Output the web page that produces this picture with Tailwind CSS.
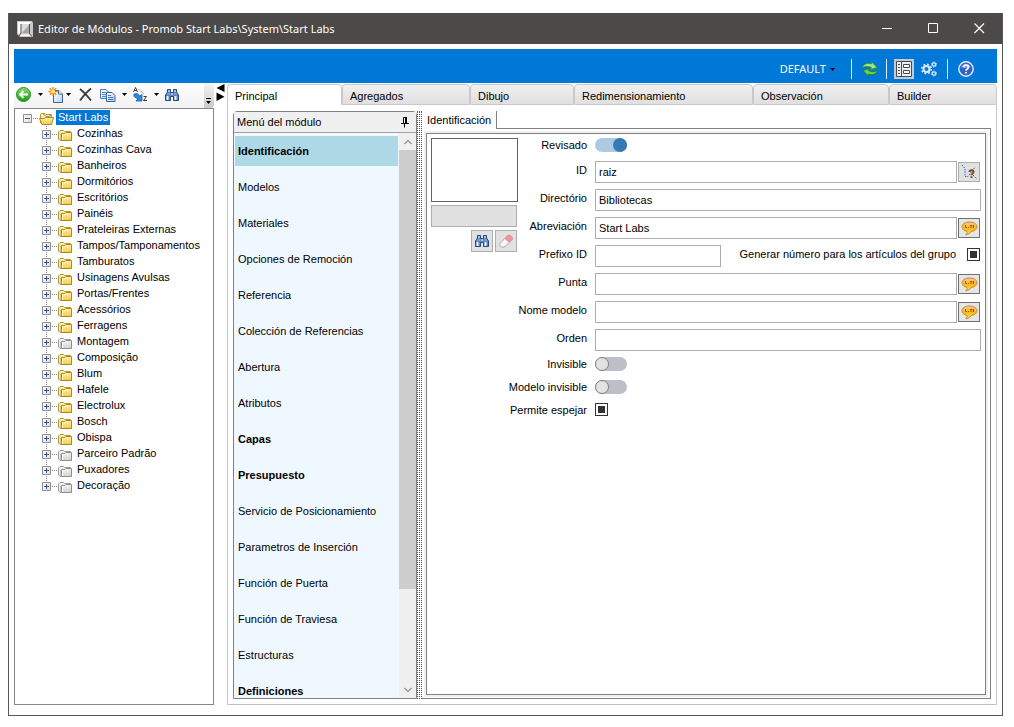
<!DOCTYPE html>
<html lang="es">
<head>
<meta charset="utf-8">
<title>Editor de Módulos - Promob Start Labs\System\Start Labs</title>
<script src="https://cdn.jsdelivr.net/npm/@tailwindcss/browser@4"></script>
</head>
<body class="bg-white text-black text-[11px] leading-4 font-['Liberation_Sans',sans-serif]">
<svg class="absolute size-0" aria-hidden="true">
  <defs>
    <linearGradient id="gold" x1="0" y1="0" x2="0" y2="1"><stop offset="0" stop-color="#fdf3a8"/><stop offset="1" stop-color="#f3c94a"/></linearGradient>
    <linearGradient id="grey" x1="0" y1="0" x2="0" y2="1"><stop offset="0" stop-color="#f4f4f4"/><stop offset="1" stop-color="#d2d2d2"/></linearGradient>
    <linearGradient id="green" x1="0" y1="0" x2="0" y2="1"><stop offset="0" stop-color="#86dc70"/><stop offset="1" stop-color="#149a14"/></linearGradient>
    <linearGradient id="page" x1="0" y1="0" x2="1" y2="1"><stop offset="0" stop-color="#ffffff"/><stop offset="1" stop-color="#b5d4f5"/></linearGradient>
    <linearGradient id="bubble" x1="0" y1="0" x2="0" y2="1"><stop offset="0" stop-color="#f8c899"/><stop offset=".5" stop-color="#fcb816"/><stop offset="1" stop-color="#ffe030"/></linearGradient>
    <linearGradient id="expand" x1="0" y1="0" x2="1" y2="1"><stop offset="0" stop-color="#ffffff"/><stop offset="1" stop-color="#dcdcdc"/></linearGradient>
  </defs>
  <symbol id="folder" viewBox="0 0 14 12">
    <path d="M.5 10V3L2 1.5H5.500L6.500 2.500H12.500V5H3V11.500H2Z" fill="#fbefb0" stroke="#bb9327"/>
    <path d="M3.500 11.500V4.500H7L8 3.500H13.500V11.500Z" fill="url(#gold)" stroke="#b0871c"/>
    <path d="M4.500 5V11M4 5.500H7.500" stroke="#fffbe0" fill="none"/>
  </symbol>
  <symbol id="folder-off" viewBox="0 0 14 12">
    <path d="M.5 10V3L2 1.5H5.500L6.500 2.500H12.500V5H3V11.500H2Z" fill="#eee" stroke="#9a9a9a"/>
    <path d="M3.500 11.500V4.500H7L8 3.500H13.500V11.500Z" fill="url(#grey)" stroke="#8d8d8d"/>
    <path d="M4.500 5V11M4 5.500H7.500" stroke="#fff" fill="none"/>
  </symbol>
  <symbol id="folder-open" viewBox="0 0 15 13">
    <path d="M1.500 11V2.500L2.500 1.500H6L7 2.500H12.500V6" fill="#fbefb0" stroke="#bb9327"/>
    <path d="M4 2 8 5 12 3.500" fill="none" stroke="#8d8d8d"/>
    <path d="M3 12.500H12.500L14.500 5.500H6.500L5.500 6.500H.500Z" fill="url(#gold)" stroke="#b0871c"/>
  </symbol>
  <symbol id="binoculars" viewBox="0 0 16 14">
    <path d="M3.500 1.500H6.500V4.500H9.500V1.500H12.500V4L14.500 7V12.500H9.500V8.500H6.500V12.500H1.500V7L3.500 4Z" fill="#5f83bd" stroke="#24457f"/>
    <path d="M5 2V4M11 2V4M7 6H9" stroke="#fff"/>
    <path d="M3.500 8V12M11.500 8V12" stroke="#e9f1fb" stroke-width="2"/>
    <path d="M3 6H6M10 6H13" stroke="#9bb6dc"/>
  </symbol>
  <symbol id="caret" viewBox="0 0 5 3"><path d="M0 0H5L2.500 3Z"/></symbol>
  <symbol id="speech" viewBox="0 0 17 15">
    <path d="M8.500 1C4 1 1 3 1 5.800C1 8.200 3.200 9.900 6 10.400C6.500 11.500 6 12.800 4.800 13.800C7.800 13.300 9.500 12 10.200 10.500C13.700 10 16 8.300 16 5.800C16 3 13 1 8.500 1Z" fill="url(#bubble)" stroke="#c08d30"/>
    <path d="M4.500 4V6.500H6M7 6.500H8M9 4.500H11.500M9 6H11.500M12.500 4V7" fill="none" stroke="#b2560d"/>
  </symbol>
</svg>

<div class="flex h-screen flex-col pt-[13px] pr-[11px] pb-[11px] pl-2">
  <div class="flex min-h-0 flex-1 flex-col border border-t-0 border-[#58565a]">
    <header class="flex h-[31px] shrink-0 items-center bg-[#4c4a48] pl-2 pr-[17px] text-white">
      <svg class="mr-[5px] size-4 shrink-0" viewBox="0 0 16 16"><path d="M0 0H15L16 2V16H3L0 13Z" fill="#c8c8c8"/><path d="M1 1H14L12.500 3H4V12L1 13Z" fill="#fff"/><path d="M4 3H12V12H4Z" fill="#dcdcdc"/><path d="M12 4V12H5Z" fill="#a7a7a7"/><path d="M4 3V12M12.500 3V12.500" stroke="#54514e"/><path d="M4 12 2 15M12.500 12.500 15 15.500" stroke="#54514e"/><path d="M4 13.500H12L13.500 15H3Z" fill="#fff"/></svg>
      <h1 class="flex-1 truncate font-['Noto_Sans',sans-serif] text-[11px]">Editor de Módulos - Promob Start Labs\System\Start Labs</h1>
      <div class="flex gap-[35px]">
        <button aria-label="Minimizar" type="button"><svg class="size-[11px]" viewBox="0 0 11 11"><path d="M0 5.500H10" stroke="#fff"/></svg></button>
        <button aria-label="Maximizar" type="button"><svg class="size-[11px]" viewBox="0 0 11 11"><path d="M.500.500H9.500V9.500H.500Z" fill="none" stroke="#fff"/></svg></button>
        <button aria-label="Cerrar" type="button"><svg class="size-[11px]" viewBox="0 0 11 11"><path d="M.500.500 10 10M10 .500.500 10" stroke="#fff" stroke-width="1.200"/></svg></button>
      </div>
    </header>

    <div class="flex min-h-0 flex-1 flex-col px-[5px] pt-[5px] pb-2.5">
      <div class="flex h-[34px] shrink-0 items-center justify-end bg-[#0078d7] pt-1.5 pr-[23px] text-white">
        <button type="button" class="mr-4 flex items-center gap-1 font-['Noto_Sans',sans-serif] text-[11px]">DEFAULT<svg class="h-[3px] w-[5px] text-black" fill="currentColor"><use href="#caret"/></svg></button>
        <span class="mr-2.5 h-5 w-px bg-white/90"></span>
        <button type="button" aria-label="Actualizar" class="mr-2"><svg class="size-4" viewBox="0 0 16 16"><path d="M.500 6.500C1.500 3 5.500 1.500 9.500 3V.800L15 6.500 8.500 8.500 9.500 6.500C7 5 3.500 5 .500 6.500Z" fill="#a4e886" stroke="#2f9a35" stroke-width=".9"/><path d="M15.500 9.500C14.500 13 10.500 14.500 6.500 13V15.200L1 9.500 7.500 7.500 6.500 9.500C9 11 12.500 11 15.500 9.500Z" fill="#6fcf50" stroke="#1f8526" stroke-width=".9"/></svg></button>
        <span class="mr-[7px] h-5 w-px bg-white/90"></span>
        <button type="button" aria-label="Panel de propiedades" class="mr-[7px] flex size-5 items-center justify-center bg-[#c3ccd6]"><svg class="size-[18px]" viewBox="0 0 18 18"><path d="M1.500 1.500H16.500V16.500H1.500Z" fill="#eceef0" stroke="#4a4a4a"/><path d="M6.500 2V16M3 4.500H5M3 7.500H5M3 10.500H5M3 13.500H5" stroke="#4a4a4a"/><path d="M8.500 4.500H14.500V7.500H8.500ZM8.500 10.500H14.500V13.500H8.500Z" fill="#fff" stroke="#4a4a4a"/></svg></button>
        <button type="button" aria-label="Configuración" class="mr-2.5"><svg class="size-4" viewBox="0 0 16 16" fill="none" stroke="#dceaf8"><circle cx="5.500" cy="8" r="3" stroke-width="2"/><circle cx="5.500" cy="8" r="4.700" stroke-width="1.600" stroke-dasharray="1.850 1.840"/><circle cx="13" cy="3.500" r="1.600" stroke-width="1.200"/><circle cx="13" cy="3.500" r="2.500" stroke-width="1" stroke-dasharray="1 .960"/><circle cx="13" cy="12.500" r="1.600" stroke-width="1.200"/><circle cx="13" cy="12.500" r="2.500" stroke-width="1" stroke-dasharray="1 .960"/></svg></button>
        <span class="mr-2.5 h-5 w-px bg-white/90"></span>
        <button type="button" aria-label="Ayuda"><svg class="size-4" viewBox="0 0 16 16"><circle cx="8" cy="8" r="7.200" fill="#2f63c8" stroke="#e4edfb" stroke-width="1.400"/><path d="M3 6A5.500 5 0 0 1 13 6Q8 8 3 6" fill="#6f9ae6"/><path d="M5.600 6.300C5.600 3.300 10.400 3.300 10.400 6.200C10.400 8 8 8 8 9.800M8 11V12.600" fill="none" stroke="#fff" stroke-width="1.800"/></svg></button>
      </div>

      <div class="flex min-h-0 flex-1">
        <aside class="flex w-[200px] shrink-0 flex-col">
          <div class="flex h-[25px] shrink-0 items-stretch rounded-r bg-linear-to-b from-white to-[#f1f1f1]">
            <div class="flex flex-1 items-center pb-0.5 pl-0.5">
              <button type="button" aria-label="Volver"><svg class="size-[15px]" viewBox="0 0 15 15"><circle cx="7.500" cy="7.500" r="7" fill="url(#green)" stroke="#2a8f22"/><path d="M12 7.500H4.500M7.500 4 4 7.500 7.500 11" fill="none" stroke="#fff" stroke-width="2"/></svg></button>
              <button type="button" aria-label="Historial" class="ml-[7px]"><svg class="h-[3px] w-[5px]"><use href="#caret"/></svg></button>
              <button type="button" aria-label="Nuevo" class="ml-[5px]"><svg class="size-4" viewBox="0 0 16 16"><path d="M5.500 3.500H10.500L14.500 7V15.500H5.500Z" fill="url(#page)" stroke="#46618c"/><path d="M10.500 3.500V7H14.500" fill="#fff" stroke="#46618c"/><path d="M5 0V9M.500 4.500H9.500M1.800 1.300 8.200 7.700M8.200 1.300 1.800 7.700" stroke="#e98a11" stroke-width="1.300"/><circle cx="5" cy="4.500" r="2" fill="#ffe27a"/></svg></button>
              <button type="button" aria-label="Opciones de nuevo" class="ml-0.5"><svg class="h-[3px] w-[5px]"><use href="#caret"/></svg></button>
              <button type="button" aria-label="Eliminar" class="ml-2"><svg class="h-[13px] w-[13px]" viewBox="0 0 13 13"><path d="M1 1Q6 5 12 12.500M12 .500Q6 5 1 12.500" fill="none" stroke="#3c3c3c" stroke-width="1.800"/></svg></button>
              <button type="button" aria-label="Copiar" class="ml-2"><svg class="size-4" viewBox="0 0 16 16"><path d="M.500 2.500H6L8.500 5V11.500H.500Z" fill="url(#page)" stroke="#5579b5"/><path d="M2 5.500H6M2 7.500H6M2 9.500H6" stroke="#5d8ac8"/><path d="M6.500 5.500H12L15 8.500V14.500H6.500Z" fill="url(#page)" stroke="#3d62a5"/><path d="M8 8.500H11M8 10.500H13.500M8 12.500H13.500" stroke="#3f75bd"/></svg></button>
              <button type="button" aria-label="Opciones de copia" class="ml-1.5"><svg class="h-[3px] w-[5px]"><use href="#caret"/></svg></button>
              <button type="button" aria-label="Ordenar" class="ml-1.5"><svg class="size-[15px]" viewBox="0 0 15 15"><path d="M.500 5 2.500 .500 4.500 5M1.300 3.500H3.800M10.500 9.500H13.500L10.500 13.500H14" fill="none" stroke="#3c3c3c"/><path d="M6 2.500 8 4.500 11 7" stroke="#777" stroke-dasharray="1 1"/><path d="M1 7 4.500 6.500 6.500 9 9 7.500V14H3L5 12 1 9.500Z" fill="#2f8be0" stroke="#1558a8" stroke-width=".8"/></svg></button>
              <button type="button" aria-label="Opciones de orden" class="ml-1.5"><svg class="h-[3px] w-[5px]"><use href="#caret"/></svg></button>
              <button type="button" aria-label="Buscar" class="ml-[5px]"><svg class="h-3.5 w-4"><use href="#binoculars"/></svg></button>
            </div>
            <button type="button" aria-label="Más botones" class="flex w-2.5 items-end rounded-r bg-linear-to-b from-[#f6f6f6] to-[#c9c9c9] pb-1 pl-0.5"><svg class="h-1.5 w-[5px]" viewBox="0 0 5 6"><path d="M0 0H5V1H0ZM0 3H5L2.500 6Z"/></svg></button>
          </div>
          <ul id="tree" class="min-h-0 flex-1 overflow-hidden border border-[#828790] pt-px pl-2"></ul>
        </aside>

        <div class="flex w-[13px] shrink-0 flex-col items-center pt-px">
          <svg class="h-[17px] w-[9px]" viewBox="0 0 9 17"><path d="M8.500 0V8L.500 4ZM.500 8.500V17L8.500 12.700Z"/></svg>
        </div>

        <main class="flex min-w-0 flex-1 flex-col">
          <nav class="flex h-[22px] shrink-0 pt-px [&>button]:flex [&>button]:rounded-t-sm [&>button]:border [&>button]:border-[#c9c9c9] [&>button]:pt-[3px] [&>button]:leading-4">
            <button type="button" class="w-[115px] border-b-0! bg-white pl-[7px]">Principal</button>
            <button type="button" class="w-32 bg-linear-to-b from-[#f0f0f0] to-[#dfdfdf] pl-[7px]">Agregados</button>
            <button type="button" class="w-[104px] bg-linear-to-b from-[#f0f0f0] to-[#dfdfdf] pl-[7px]">Dibujo</button>
            <button type="button" class="w-[179px] bg-linear-to-b from-[#f0f0f0] to-[#dfdfdf] pl-[7px]">Redimensionamiento</button>
            <button type="button" class="w-[136px] bg-linear-to-b from-[#f0f0f0] to-[#dfdfdf] pl-[7px]">Observación</button>
            <button type="button" class="flex-1 bg-linear-to-b from-[#f0f0f0] to-[#dfdfdf] pl-[7px]">Builder</button>
          </nav>

          <div class="flex min-h-0 flex-1 border border-t-0 border-[#c3c3c3] pt-1.5 pr-[5px] pb-[5px] pl-[5px]">
            <section class="flex w-[184px] shrink-0 flex-col rounded-t-sm border border-[#828282]">
              <div class="flex h-[21px] shrink-0 items-center border-b border-[#a0a0a0] bg-[#f0f0f0] pr-[7px] pl-[3px]">
                <h2 class="flex-1">Menú del módulo</h2>
                <button type="button" aria-label="Anclar"><svg class="h-[11px] w-2" viewBox="0 0 8 11"><path d="M2.500 6.500V.500H5.500V6.500M0 6.500H8M3.500 7V10.500" fill="none" stroke="#000"/><path d="M5 0V7" stroke="#000" stroke-width="2"/></svg></button>
              </div>
              <div class="flex min-h-0 flex-1 bg-[#f0f8ff]">
                <ul id="menu" class="flex min-w-0 flex-1 flex-col gap-1.5 overflow-hidden pt-[3px] pr-px pl-px"></ul>
                <div class="flex w-[17px] shrink-0 flex-col bg-[#f0f0f0]">
                  <svg class="size-[17px] shrink-0" viewBox="0 0 17 17"><path d="M5.500 11 9 7.500 12.500 11" fill="none" stroke="#9b9b9b" stroke-width="1.500"/></svg>
                  <div class="w-full flex-[439] bg-[#cdcdcd]"></div>
                  <div class="flex-[92]"></div>
                  <svg class="size-[17px] shrink-0" viewBox="0 0 17 17"><path d="M5.500 7 9 10.500 12.500 7" fill="none" stroke="#9b9b9b" stroke-width="1.500"/></svg>
                </div>
              </div>
            </section>

            <div class="flex w-[5px] shrink-0 justify-between">
              <span class="w-px border-l border-dotted border-[#555]"></span>
              <span class="w-px border-l border-dotted border-[#555]"></span>
              <span class="w-px border-l border-dotted border-[#555]"></span>
            </div>

            <section class="flex min-w-0 flex-1 flex-col">
              <div class="flex h-[18px] shrink-0">
                <button type="button" class="w-[75px] border-r border-[#828282] pl-[5px] text-left">Identificación</button>
                <span class="flex-1 border-b border-[#828282]"></span>
              </div>
              <div class="flex min-h-0 flex-1 border-r border-b border-[#828282] pt-0.5 pr-0.5 pb-px pl-0.5">
                <div class="min-w-0 flex-1 bg-[#f0f0f0] p-0.5">
                <form class="grid h-full grid-cols-1 content-start border border-[#828282] bg-white pr-1">
                  <div class="col-start-1 row-start-1 mt-1 ml-1 flex w-[87px] flex-col gap-[3px] self-start">
                    <div class="h-16 border border-[#646464]"></div>
                    <div class="mr-px h-[22px] border border-[#adadad] bg-[#e1e1e1]"></div>
                    <div class="mr-px flex justify-end gap-0.5">
                      <button type="button" aria-label="Buscar imagen" class="flex size-[22px] items-center justify-center border border-[#adadad] bg-[#e1e1e1]"><svg class="h-3.5 w-4"><use href="#binoculars"/></svg></button>
                      <button type="button" aria-label="Borrar imagen" class="flex size-[22px] items-center justify-center border border-[#adadad] bg-[#e1e1e1]"><svg class="size-4" viewBox="0 0 16 16"><path d="M2 10.500 9.500 2.500C11 1 15.500 3.500 14.500 6.500L7 13.500C4.500 15.500 .500 13 2 10.500Z" fill="#f7f7f7" stroke="#b3a7a7"/><path d="M6.500 5.700 9.500 2.500C11 1 15.500 3.500 14.500 6.500L11 9.700Z" fill="#f2929d"/></svg></button>
                    </div>
                  </div>
                  <div class="col-start-1 row-start-1 [&_label]:w-40 [&_label]:shrink-0 [&_label]:text-right [&_label]:leading-4 pointer-events-none [&_input]:pointer-events-auto [&_button]:pointer-events-auto">
                    <div class="flex h-6 items-center gap-2 pb-0.5">
                      <label for="revisado">Revisado</label>
                      <input id="revisado" type="checkbox" role="switch" checked class="flex h-3.5 w-8 appearance-none justify-end rounded-full bg-[#aecae3] before:size-3.5 before:rounded-full before:bg-[#337ab7]">
                    </div>
                    <div class="flex h-7 items-center gap-2">
                      <label for="id" class="pb-1">ID</label>
                      <input id="id" value="raiz" class="h-[22px] min-w-0 flex-1 border border-[#abadb3] bg-white px-[3px]">
                      <button type="button" aria-label="Verificar ID" class="mr-px -ml-[7px] flex h-5 w-[22px] items-center justify-center border border-[#adadad] bg-[#e1e1e1]"><svg class="h-4 w-[18px]" viewBox="0 0 18 16" fill="none"><path d="M2 1 5 4.500V12.500H8L15 3" stroke="#2a6be0" stroke-dasharray="1.500 1"/><path d="M13 11 17 15" stroke="#2a50d0" stroke-dasharray="1.500 1"/><path d="M9.500 8C9.500 5.500 13.500 5.500 13.500 8C13.500 9.500 11.500 9.500 11.500 11.200M11.500 12.200V14" stroke="#7a4a22" stroke-width="2"/></svg></button>
                    </div>
                    <div class="flex h-7 items-center gap-2">
                      <label for="dir" class="pb-1">Directório</label>
                      <input id="dir" value="Bibliotecas" class="h-[22px] min-w-0 flex-1 border border-[#abadb3] bg-white px-[3px]">
                    </div>
                    <div class="flex h-7 items-center gap-2">
                      <label for="abr" class="pb-1">Abreviación</label>
                      <input id="abr" value="Start Labs" class="h-[22px] min-w-0 flex-1 border border-[#abadb3] bg-white px-[3px]">
                      <button type="button" aria-label="Traducir abreviación" class="mr-px -ml-[7px] flex h-5 w-[22px] items-center justify-center border border-[#707070] bg-[#e6e6e6]"><svg class="h-[15px] w-[17px]"><use href="#speech"/></svg></button>
                    </div>
                    <div class="flex h-7 items-center gap-2">
                      <label for="prefijo" class="pb-1">Prefixo ID</label>
                      <input id="prefijo" class="h-[22px] w-[126px] border border-[#abadb3] bg-white px-[3px]">
                      <label for="generar" class="ml-auto w-auto! pb-1">Generar número para los artículos del grupo</label>
                      <input id="generar" type="checkbox" checked class="mr-px mb-1 ml-[3px] size-[13px] appearance-none border border-[#333] bg-[#333] bg-clip-content p-0.5">
                    </div>
                    <div class="flex h-7 items-center gap-2">
                      <label for="punta" class="pb-1">Punta</label>
                      <input id="punta" class="h-[22px] min-w-0 flex-1 border border-[#abadb3] bg-white px-[3px]">
                      <button type="button" aria-label="Traducir punta" class="mr-px -ml-[7px] flex h-5 w-[22px] items-center justify-center border border-[#707070] bg-[#e6e6e6]"><svg class="h-[15px] w-[17px]"><use href="#speech"/></svg></button>
                    </div>
                    <div class="flex h-7 items-center gap-2">
                      <label for="nome" class="pb-1">Nome modelo</label>
                      <input id="nome" class="h-[22px] min-w-0 flex-1 border border-[#abadb3] bg-white px-[3px]">
                      <button type="button" aria-label="Traducir nombre" class="mr-px -ml-[7px] flex h-5 w-[22px] items-center justify-center border border-[#707070] bg-[#e6e6e6]"><svg class="h-[15px] w-[17px]"><use href="#speech"/></svg></button>
                    </div>
                    <div class="flex h-7 items-center gap-2">
                      <label for="orden" class="pb-1">Orden</label>
                      <input id="orden" class="h-[22px] min-w-0 flex-1 border border-[#abadb3] bg-white px-[3px]">
                    </div>
                    <div class="flex h-[23px] items-center gap-2 pb-1">
                      <label for="invisible">Invisible</label>
                      <input id="invisible" type="checkbox" role="switch" class="flex h-3.5 w-8 appearance-none rounded-full bg-[#bcbfca] before:size-3.5 before:rounded-full before:border before:border-[#808080] before:bg-[#e3e3e3]">
                    </div>
                    <div class="flex h-[23px] items-center gap-2 pb-1">
                      <label for="modelo-invisible">Modelo invisible</label>
                      <input id="modelo-invisible" type="checkbox" role="switch" class="flex h-3.5 w-8 appearance-none rounded-full bg-[#bcbfca] before:size-3.5 before:rounded-full before:border before:border-[#808080] before:bg-[#e3e3e3]">
                    </div>
                    <div class="flex h-[23px] items-center gap-2 pb-1">
                      <label for="espejar">Permite espejar</label>
                      <input id="espejar" type="checkbox" checked class="size-[13px] appearance-none border border-[#333] bg-[#333] bg-clip-content p-0.5">
                    </div>
                  </div>
                </form>
                </div>
              </div>
            </section>
          </div>
        </main>
      </div>
    </div>
  </div>
</div>

<script>
  const folders = ['Cozinhas', 'Cozinhas Cava', 'Banheiros', 'Dormitórios', 'Escritórios', 'Painéis', 'Prateleiras Externas',
    'Tampos/Tamponamentos', 'Tamburatos', 'Usinagens Avulsas', 'Portas/Frentes', 'Acessórios', 'Ferragens', 'Montagem',
    'Composição', 'Blum', 'Hafele', 'Electrolux', 'Bosch', 'Obispa', 'Parceiro Padrão', 'Puxadores', 'Decoração'];
  const inactive = ['Montagem', 'Parceiro Padrão', 'Puxadores', 'Decoração'];

  const root = `<li class="flex h-4 items-center">
    <svg class="h-4 w-4 shrink-0" viewBox="0 0 16 16"><path d="M.5 4.500H8.500V12.500H.500Z" fill="url(#expand)" stroke="#919191"/><path d="M2 8.500H7" stroke="#3b56a0"/><path d="M10 8.500H16" stroke="#808080" stroke-dasharray="1 1"/></svg>
    <svg class="mr-0.5 h-[13px] w-[15px] shrink-0"><use href="#folder-open"/></svg>
    <span class="mb-px h-[15px] bg-[#0078d7] px-0.5 leading-[15px] text-white">Start Labs</span></li>`;

  document.getElementById('tree').innerHTML = root + folders.map((name, i) => {
    const last = i === folders.length - 1;
    return `<li class="flex h-4 items-center pl-[19px]">
      <svg class="h-4 w-4 shrink-0" viewBox="0 0 16 16"><path d="M4.500 0V${last ? 4 : 16}" stroke="#808080" stroke-dasharray="1 1"/><path d="M.500 4.500H8.500V12.500H.500Z" fill="url(#expand)" stroke="#919191"/><path d="M2 8.500H7M4.500 6V11" stroke="#3b56a0"/><path d="M10 8.500H16" stroke="#808080" stroke-dasharray="1 1"/></svg>
      <svg class="mt-0.5 mr-[5px] h-3 w-3.5 shrink-0"><use href="${inactive.includes(name) ? '#folder-off' : '#folder'}"/></svg>
      <span class="whitespace-nowrap pb-0.5 leading-4">${name}</span></li>`;
  }).join('');

  const menu = ['Identificación', 'Modelos', 'Materiales', 'Opciones de Remoción', 'Referencia', 'Colección de Referencias',
    'Abertura', 'Atributos', 'Capas', 'Presupuesto', 'Servicio de Posicionamiento', 'Parametros de Inserción',
    'Función de Puerta', 'Función de Traviesa', 'Estructuras', 'Definiciones'];
  const strong = ['Capas', 'Presupuesto', 'Definiciones'];
  document.getElementById('menu').innerHTML = menu.map((name, i) => {
    const cls = i === 0 ? 'h-[30px] w-full bg-[#add8e6] pl-[3px] text-left font-bold'
      : strong.includes(name) ? 'h-[30px] w-full pl-[3px] text-left font-bold'
      : 'h-[30px] w-full pl-[3px] text-left';
    return `<li class="shrink-0"><button type="button" class="${cls}">${name}</button></li>`;
  }).join('');
</script>
</body>
</html>
